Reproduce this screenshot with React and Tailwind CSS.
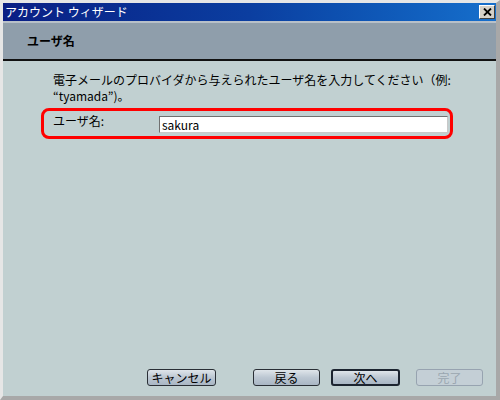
import React from "react";

const font = { fontFamily: '"MS UI Gothic", "Noto Sans CJK JP", "Liberation Sans", sans-serif' };

const Button = ({ children, className = "", disabled = false, isDefault = false }) => {
  if (disabled) {
    return (
      <div className={`h-[17px] rounded-[3px] border border-[#97a3b0] bg-[#c4cfd6] flex items-center justify-center text-[12px] text-[#9aa6b0] ${className}`}>
        {children}
      </div>
    );
  }
  return (
    <div className={`h-[17px] rounded-[3px] ${isDefault ? "border-2 border-[#1c2430]" : "border border-[#2a2f36]"} bg-gradient-to-b from-[#dfe5ea] via-[#bcc7d2] to-[#a9b6c4] flex items-center justify-center text-[12px] text-black ${className}`}>
      {children}
    </div>
  );
};

const App = () => {
  return (
    <div className="w-[500px] h-[400px] bg-[#c9c9c9] border-t-[3px] border-l-[3px] border-t-[#e6e6e6] border-l-[#e6e6e6] border-r-[4px] border-b-[4px] border-r-[#a8a8a8] border-b-[#a8a8a8] flex flex-col overflow-hidden" style={font}>
      {/* title bar */}
      <div className="h-[18px] bg-gradient-to-r from-[#0a1e84] via-[#0b3ea0] to-[#166fcc] flex items-center justify-between pl-[2px] pr-[1px]">
        <span className="text-white text-[12px] leading-none">アカウント ウィザード</span>
        <div className="w-[16px] h-[14px] bg-[#d4d0c8] border border-t-white border-l-white border-r-[#404040] border-b-[#404040] flex items-center justify-center">
          <svg width="9" height="8" viewBox="0 0 9 8">
            <path d="M1 0.5 L8 7.5 M8 0.5 L1 7.5" stroke="black" strokeWidth="1.8" />
          </svg>
        </div>
      </div>
      <div className="h-[2px] bg-[#b8c0c8]" />

      {/* header */}
      <div className="h-[38px] bg-[#8f9eab] border-b-2 border-[#111] flex items-center pl-[24px]">
        <span className="text-[12px] font-bold text-black">ユーザ名</span>
      </div>

      {/* body */}
      <div className="flex-1 bg-[#c1d0d1] flex flex-col">
        <div className="pl-[50px] pt-[11px] pr-[40px] text-[12px] leading-[16px] text-black">
          <p>電子メールのプロバイダから与えられたユーザ名を入力してください（例:</p>
          <p>“tyamada”)。</p>
        </div>

        <div className="ml-[38px] mt-[4px] w-[412px] h-[31px] border-[3px] border-[#ff0000] rounded-[8px] flex items-center pl-[9px]">
          <span className="text-[12px] leading-[14px] text-black w-[106px] mb-[6px]">ユーザ名:</span>
          <div className="w-[289px] h-[17px] bg-white border border-t-[#707070] border-l-[#707070] border-r-[#c8c8c8] border-b-[#c8c8c8] flex items-center pl-[2px] text-[12px] text-black mt-[2px]">
            sakura
          </div>
        </div>

        <div className="mt-auto mb-[10px] flex items-center">
          <Button className="ml-[144px] w-[69px]">キャンセル</Button>
          <Button className="ml-[37px] w-[67px]">戻る</Button>
          <Button isDefault className="ml-[11px] w-[69px]">次へ</Button>
          <Button disabled className="ml-[16px] w-[67px]">完了</Button>
        </div>
      </div>
    </div>
  );
};

export default App;
